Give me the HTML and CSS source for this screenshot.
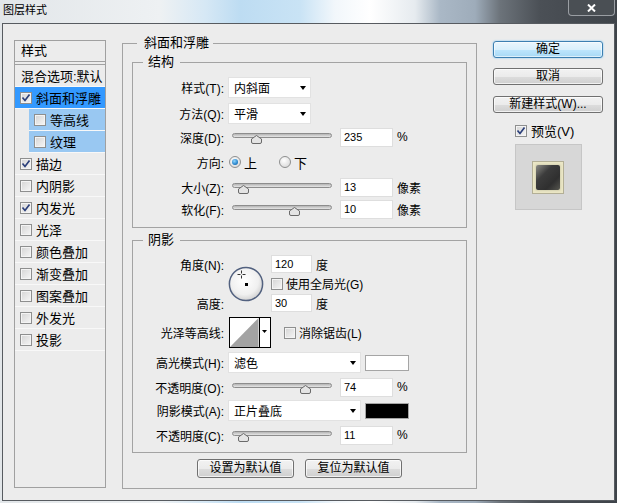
FILE: index.html
```html
<!DOCTYPE html>
<html lang="zh-CN">
<head>
    <meta charset="UTF-8">
    <title>图层样式</title>
    <link rel="stylesheet" href="styles.css">
</head>
<body>
<div class="window">
    <div class="titlebar">
        <span class="title">图层样式</span>
        <span class="close">
            <svg width="9" height="8" viewBox="0 0 9 8"><path d="M1 0.5 L8 7.5 M8 0.5 L1 7.5" stroke="#fff" stroke-width="2"/></svg>
        </span>
    </div>

    <div class="client">
        <!-- style list -->
        <div class="style-list">
            <div class="list-head">样式</div>
            <div class="list-body">
                <div class="item plain">混合选项:默认</div>
                <div class="item selected"><span class="cb"><svg width="10" height="10" viewBox="0 0 10 10"><path d="M1.5 4.5 L4 7.5 L8.5 1.5" fill="none" stroke="#2b3f7a" stroke-width="1.7"/></svg></span>斜面和浮雕</div>
                <div class="item sub"><span class="cb"></span>等高线</div>
                <div class="item sub"><span class="cb"></span>纹理</div>
                <div class="item"><span class="cb"><svg width="10" height="10" viewBox="0 0 10 10"><path d="M1.5 4.5 L4 7.5 L8.5 1.5" fill="none" stroke="#2b3f7a" stroke-width="1.7"/></svg></span>描边</div>
                <div class="item"><span class="cb"></span>内阴影</div>
                <div class="item"><span class="cb"><svg width="10" height="10" viewBox="0 0 10 10"><path d="M1.5 4.5 L4 7.5 L8.5 1.5" fill="none" stroke="#2b3f7a" stroke-width="1.7"/></svg></span>内发光</div>
                <div class="item"><span class="cb"></span>光泽</div>
                <div class="item"><span class="cb"></span>颜色叠加</div>
                <div class="item"><span class="cb"></span>渐变叠加</div>
                <div class="item"><span class="cb"></span>图案叠加</div>
                <div class="item"><span class="cb"></span>外发光</div>
                <div class="item"><span class="cb"></span>投影</div>
            </div>
        </div>

        <!-- settings -->
        <fieldset class="group main">
            <legend>斜面和浮雕</legend>

            <fieldset class="group inner structure">
                <legend>结构</legend>
                <div class="row r-select">
                    <label class="lbl">样式(T):</label>
                    <div class="select short"><span>内斜面</span><i class="arrow"></i></div>
                </div>
                <div class="row r-select gap5">
                    <label class="lbl">方法(Q):</label>
                    <div class="select short"><span>平滑</span><i class="arrow"></i></div>
                </div>
                <div class="row gap3">
                    <label class="lbl">深度(D):</label>
                    <div class="slider"><div class="track"></div><svg class="thumb" style="left:19px" width="11" height="9" viewBox="0 0 11 9"><path d="M5.5 0.5 L10.5 4 L10.5 7 Q10.5 8.5 9 8.5 L2 8.5 Q0.5 8.5 0.5 7 L0.5 4 Z" fill="#e4e4e4" stroke="#6a6a6a"/></svg></div>
                    <input class="num" type="text" value="235">
                    <span class="unit">%</span>
                </div>
                <div class="row gap5">
                    <label class="lbl">方向:</label>
                    <span class="radio on"></span><span class="radio-text">上</span>
                    <span class="radio off"></span><span class="radio-text">下</span>
                </div>
                <div class="row gap5">
                    <label class="lbl">大小(Z):</label>
                    <div class="slider"><div class="track"></div><svg class="thumb" style="left:6px" width="11" height="9" viewBox="0 0 11 9"><path d="M5.5 0.5 L10.5 4 L10.5 7 Q10.5 8.5 9 8.5 L2 8.5 Q0.5 8.5 0.5 7 L0.5 4 Z" fill="#e4e4e4" stroke="#6a6a6a"/></svg></div>
                    <input class="num" type="text" value="13">
                    <span class="unit">像素</span>
                </div>
                <div class="row gap2">
                    <label class="lbl">软化(F):</label>
                    <div class="slider"><div class="track"></div><svg class="thumb" style="left:57px" width="11" height="9" viewBox="0 0 11 9"><path d="M5.5 0.5 L10.5 4 L10.5 7 Q10.5 8.5 9 8.5 L2 8.5 Q0.5 8.5 0.5 7 L0.5 4 Z" fill="#e4e4e4" stroke="#6a6a6a"/></svg></div>
                    <input class="num" type="text" value="10">
                    <span class="unit">像素</span>
                </div>
            </fieldset>

            <fieldset class="group inner shading">
                <legend>阴影</legend>
                <div class="angle-block">
                    <label class="lbl a-angle">角度(N):</label>
                    <svg class="dial" width="36" height="36" viewBox="0 0 36 36">
                        <defs>
                            <radialGradient id="dialFill" cx="45%" cy="40%" r="60%">
                                <stop offset="0" stop-color="#ffffff"/>
                                <stop offset="0.7" stop-color="#f0f0f0"/>
                                <stop offset="1" stop-color="#d2d2d2"/>
                            </radialGradient>
                        </defs>
                        <circle cx="18" cy="18" r="16.6" fill="url(#dialFill)" stroke="#52617f" stroke-width="1.5"/>
                        <path d="M9.5 8.5 H12.5 M14.5 8.5 H17.5 M13.5 4.5 V7.5 M13.5 9.5 V12.5" stroke="#333" stroke-width="1"/>
                        <rect x="17" y="17" width="3" height="3" fill="#000"/>
                    </svg>
                    <div class="a-val1"><input class="num short" type="text" value="120"><span class="unit">度</span></div>
                    <div class="a-global"><span class="cb"></span>使用全局光(G)</div>
                    <label class="lbl a-alt">高度:</label>
                    <div class="a-val2"><input class="num short" type="text" value="30"><span class="unit">度</span></div>
                </div>

                <div class="row r-contour gap5">
                    <label class="lbl">光泽等高线:</label>
                    <svg class="contour" width="42" height="31" viewBox="0 0 42 31">
                        <rect x="0.5" y="0.5" width="41" height="30" fill="#fff" stroke="#000"/>
                        <polygon points="1,30 29.5,1 29.5,30" fill="#a3a3a3"/>
                        <line x1="30.5" y1="0" x2="30.5" y2="31" stroke="#000"/>
                        <polygon points="33,13 38,13 35.5,16" fill="#000"/>
                    </svg>
                    <span class="cb anti"></span><span class="cb-text">消除锯齿(L)</span>
                </div>
                <div class="row r-select gap4">
                    <label class="lbl">高光模式(H):</label>
                    <div class="select long"><span>滤色</span><i class="arrow"></i></div>
                    <span class="swatch-color white"></span>
                </div>
                <div class="row gap4">
                    <label class="lbl">不透明度(O):</label>
                    <div class="slider"><div class="track"></div><svg class="thumb" style="left:68px" width="11" height="9" viewBox="0 0 11 9"><path d="M5.5 0.5 L10.5 4 L10.5 7 Q10.5 8.5 9 8.5 L2 8.5 Q0.5 8.5 0.5 7 L0.5 4 Z" fill="#e4e4e4" stroke="#6a6a6a"/></svg></div>
                    <input class="num" type="text" value="74">
                    <span class="unit">%</span>
                </div>
                <div class="row r-select gap3">
                    <label class="lbl">阴影模式(A):</label>
                    <div class="select long"><span>正片叠底</span><i class="arrow"></i></div>
                    <span class="swatch-color black"></span>
                </div>
                <div class="row gap4">
                    <label class="lbl">不透明度(C):</label>
                    <div class="slider"><div class="track"></div><svg class="thumb" style="left:6px" width="11" height="9" viewBox="0 0 11 9"><path d="M5.5 0.5 L10.5 4 L10.5 7 Q10.5 8.5 9 8.5 L2 8.5 Q0.5 8.5 0.5 7 L0.5 4 Z" fill="#e4e4e4" stroke="#6a6a6a"/></svg></div>
                    <input class="num" type="text" value="11">
                    <span class="unit">%</span>
                </div>
            </fieldset>

            <div class="btn-row">
                <button class="btn wide">设置为默认值</button>
                <button class="btn wide">复位为默认值</button>
            </div>
        </fieldset>

        <!-- right side -->
        <div class="side">
            <button class="btn default">确定</button>
            <button class="btn cancel">取消</button>
            <button class="btn">新建样式(W)...</button>
            <div class="preview-check"><span class="cb"><svg width="10" height="10" viewBox="0 0 10 10"><path d="M1.5 4.5 L4 7.5 L8.5 1.5" fill="none" stroke="#2b3f7a" stroke-width="1.7"/></svg></span>预览(V)</div>
            <div class="preview">
                <div class="swatch"><div class="swatch-in"></div></div>
            </div>
        </div>
    </div>
</div>
</body>
</html>
```

FILE: styles.css
```css
* {
    box-sizing: border-box;
}
body {
    margin: 0;
    font-family: "Liberation Sans", "Noto Sans CJK SC", sans-serif;
    font-size: 13px;
    color: #000;
    background: #3f444a;
}
.window {
    width: 617px;
    height: 503px;
    background: linear-gradient(90deg, #e2e6e9 0, #eef1f3 160px, #d6e8f5 205px, #bddcf2 240px, #c9e3f5 300px, #f2f7fb 335px, #ffffff 370px, #e6ebef 415px, #aab8c6 440px, #9eacba 475px, #6c737a 500px, #4b5056 540px, #3e4349 617px);
}
.titlebar {
    height: 23px;
    display: flex;
    justify-content: space-between;
    align-items: flex-start;
    padding: 0 2px 0 3px;
}
.title {
    font-size: 11px;
    line-height: 14px;
    margin-top: 3px;
}
.close {
    width: 47px;
    height: 16px;
    border: 1px solid #9a9ea3;
    border-top: none;
    border-radius: 0 0 4px 4px;
    background: #4a4f54;
    display: flex;
    align-items: center;
    justify-content: center;
}

.client {
    margin: 0 2px;
    height: 478px;
    border: 1px solid #575b60;
    background: #ececec;
    display: flex;
    align-items: flex-start;
    padding: 12px 11px 0 11px;
}

/* style list */
.style-list {
    width: 92px;
    height: 448px;
    margin-top: 4px;
    border: 1px solid #a0a0a0;
    flex: none;
}
.list-head {
    height: 21px;
    line-height: 20px;
    padding-left: 6px;
    border-bottom: 1px solid #a0a0a0;
}
.list-body {
    margin-top: 2px;
    border-top: 1px solid #a0a0a0;
}
.item {
    height: 22px;
    display: flex;
    align-items: center;
    padding-left: 5px;
    border-bottom: 1px solid #f8f8f8;
    white-space: nowrap;
}
.item.plain {
    padding-left: 6px;
}
.item.selected {
    background: #3399ff;
}
.item.sub {
    margin-left: 14px;
    background: #99c8f2;
}
.item .cb {
    margin-right: 4px;
}

/* checkbox / radio */
.cb {
    width: 12px;
    height: 12px;
    flex: none;
    border: 1px solid #8e8f8f;
    background: linear-gradient(135deg, #d4d4d4, #f6f6f6);
    box-shadow: inset 0 0 0 1px #f4f4f4;
    display: flex;
    align-items: center;
    justify-content: center;
}
.cb svg {
    display: block;
}
.radio {
    width: 12px;
    height: 12px;
    flex: none;
    border-radius: 50%;
    border: 1px solid #8e8f8f;
    background: radial-gradient(circle at 40% 35%, #ffffff, #d2d2d2);
    display: flex;
    align-items: center;
    justify-content: center;
}
.radio.on::after {
    content: "";
    width: 6px;
    height: 6px;
    border-radius: 50%;
    background: radial-gradient(circle at 40% 35%, #8fd6ff, #1a78c2 70%, #0c4f8d);
}
.radio.on {
    margin-left: 1px;
}
.radio-text {
    margin-left: 3px;
    margin-right: 22px;
    font-size: 13px;
}

/* groups */
.group {
    margin: 0;
    border: 1px solid #a3a3a3;
    min-width: 0;
    font-size: 12px;
}
.group > legend {
    font-size: 13px;
    line-height: 14px;
    padding: 0 4px 0 7px;
}
.main {
    width: 355px;
    flex: none;
    margin-left: 16px;
    padding: 5px 9px 10px 9px;
}
.main > legend {
    margin-left: 5px;
}
.inner {
    padding: 8px 0 8px 0;
}
.inner > legend {
    margin-left: 10px;
    padding: 0 6px 0 5px;
}
.shading {
    margin-top: 5px;
    padding-bottom: 7px;
}

.row {
    display: flex;
    align-items: center;
    height: 20px;
}
.row.r-select {
    height: 21px;
}
.row.r-contour {
    height: 31px;
}
.gap2 { margin-top: 2px; }
.gap3 { margin-top: 3px; }
.gap4 { margin-top: 4px; }
.gap5 { margin-top: 5px; }

.lbl {
    width: 91px;
    margin-right: 4px;
    text-align: right;
    flex: none;
    white-space: nowrap;
}

.select {
    height: 21px;
    display: flex;
    align-items: center;
    justify-content: space-between;
    background: #fff;
    border: 1px solid #e2e2e2;
    padding: 0 4px 0 5px;
}
.select.short {
    width: 83px;
}
.select.long {
    width: 133px;
}
.arrow {
    width: 0;
    height: 0;
    border-left: 3.5px solid transparent;
    border-right: 3.5px solid transparent;
    border-top: 4px solid #000;
}

.slider {
    position: relative;
    width: 100px;
    height: 14px;
    margin: 0 8px 0 4px;
    flex: none;
}
.track {
    margin-top: 3px;
    height: 5px;
    border-radius: 3px;
    border: 1px solid #8d8d8d;
    background: linear-gradient(#b4b4b4, #e6e6e6);
}
.thumb {
    position: absolute;
    top: 5px;
}

.num {
    width: 53px;
    height: 19px;
    border: 1px solid #dedede;
    background: #fff;
    font-family: "Liberation Sans", sans-serif;
    font-size: 11px;
    padding: 0 0 0 3px;
    margin: 0;
    outline: none;
    flex: none;
}
.num.short {
    width: 41px;
    height: 18px;
}
.unit {
    margin-left: 4px;
    white-space: nowrap;
}

/* angle */
.angle-block {
    display: grid;
    grid-template-columns: 95px 43px auto;
    grid-template-rows: 18px 21px 18px;
}
.angle-block .lbl {
    width: auto;
    margin: 0;
    padding-right: 4px;
    display: flex;
    align-items: center;
    justify-content: flex-end;
}
.a-angle {
    grid-row: 1;
    grid-column: 1;
}
.a-alt {
    grid-row: 3;
    grid-column: 1;
}
.dial {
    grid-row: 1 / 4;
    grid-column: 2;
    align-self: center;
}
.a-val1 {
    grid-row: 1;
    grid-column: 3;
    display: flex;
    align-items: center;
}
.a-global {
    grid-row: 2;
    grid-column: 3;
    display: flex;
    align-items: center;
    white-space: nowrap;
}
.a-global .cb {
    margin-right: 3px;
}
.a-val2 {
    grid-row: 3;
    grid-column: 3;
    display: flex;
    align-items: center;
}

.contour {
    margin-left: 1px;
    flex: none;
}
.cb.anti {
    margin-left: 13px;
}
.cb-text {
    margin-left: 3px;
}

.swatch-color {
    width: 44px;
    height: 16px;
    margin-left: 4px;
    border: 1px solid #a5a5a5;
}
.swatch-color.white {
    background: #fff;
}
.swatch-color.black {
    background: #000;
}

/* buttons */
.btn {
    display: block;
    width: 110px;
    height: 17px;
    padding: 0;
    font-family: "Liberation Sans", "Noto Sans CJK SC", sans-serif;
    font-size: 12px;
    line-height: 15px;
    color: #000;
    border: 1px solid #707070;
    border-radius: 3px;
    background: linear-gradient(#f2f2f2, #ebebeb 50%, #dddddd 50%, #cfcfcf);
    box-shadow: inset 0 0 0 1px rgba(255, 255, 255, 0.7);
}
.btn.default {
    border-color: #3c7fb1;
    background: linear-gradient(#eaf6fd, #d9f0fc 50%, #bee6fd 50%, #a7d9f5);
    box-shadow: inset 0 0 0 1px rgba(255, 255, 255, 0.6), 0 0 2px #6fc3f5;
    margin-bottom: 10px;
}
.btn.cancel {
    margin-bottom: 11px;
}
.btn.wide {
    width: 97px;
    height: 19px;
    line-height: 17px;
}
.btn-row {
    display: flex;
    justify-content: center;
    gap: 11px;
    margin-top: 6px;
}

.side {
    width: 110px;
    flex: none;
    margin-left: 16px;
    padding-top: 5px;
}
.preview-check {
    display: flex;
    align-items: center;
    height: 13px;
    margin: 11px 0 0 22px;
    white-space: nowrap;
}
.preview-check .cb {
    margin-right: 4px;
}
.preview {
    width: 67px;
    height: 66px;
    margin: 7px auto 0;
    background: #d7d7d7;
    border: 1px solid #c6c6c6;
    display: flex;
    align-items: center;
    justify-content: center;
}
.swatch {
    width: 32px;
    height: 33px;
    border: 1px solid #b3af96;
    background: #ebe7c6;
    padding: 3px;
}
.swatch-in {
    height: 100%;
    border-radius: 2px;
    background: linear-gradient(135deg, #8c8c86 0%, #3c3c3c 35%, #2f2f2f 70%, #55554f 100%);
    box-shadow: 0 0 2px 1px #d6d2b2;
}
```
